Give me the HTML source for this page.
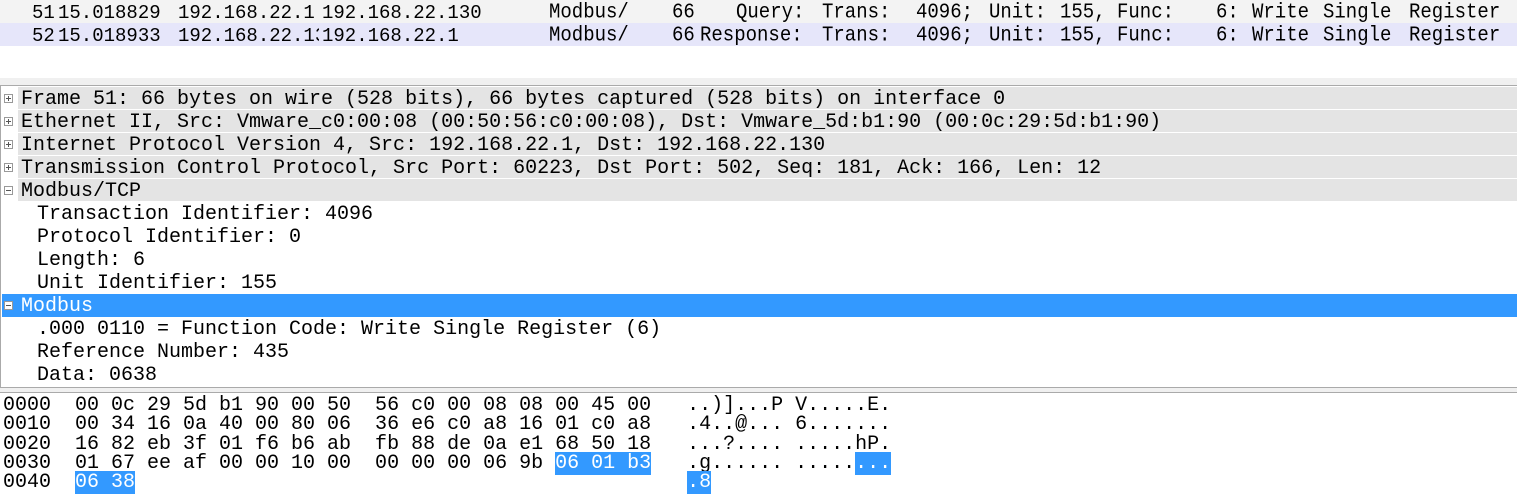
<!DOCTYPE html>
<html><head><style>
*{margin:0;padding:0;box-sizing:border-box}
body{width:1517px;height:502px;background:#fff;position:relative;overflow:hidden;font-family:"Liberation Mono","DejaVu Sans Mono",monospace;color:#000}
.a{position:absolute;white-space:pre}
.r{position:absolute;left:0;width:1517px;height:23px}
.m{font-size:19px;line-height:23px}
.n{font-family:"Liberation Mono",monospace;font-size:19px;line-height:23px;transform:scaleY(1.12);transform-origin:0 50%}
.t{font-size:20px;line-height:23px;position:absolute;white-space:pre}
.g{position:absolute;left:18px;right:0;height:22px;background:#e4e4e4}
.box{position:absolute;left:4px;width:9px;height:9px;border:1px solid #999;background:#fff}
.box:before{content:"";position:absolute;left:1px;top:3px;width:5px;height:1px;background:#555}
.p:after{content:"";position:absolute;left:3px;top:1px;width:1px;height:5px;background:#555}
.h{font-size:20px;line-height:19.3px;position:absolute;left:3px;top:396px;white-space:pre}
.s{background:#3399ff;color:#fff}
</style></head><body>
<div class="r" style="top:0;background:#f3f3f3"></div>
<div class="r" style="top:23px;background:#e6e6fa"></div>
<div class="a m" style="left:32px;top:2px">51</div>
<div class="a m" style="left:58px;top:2px">15.018829</div>
<div class="a m" style="left:178px;top:2px">192.168.22.1</div>
<div class="a m" style="left:322px;top:2px">192.168.22.130</div>
<div class="a m" style="left:32px;top:25px">52</div>
<div class="a m" style="left:58px;top:25px">15.018933</div>
<div class="a m" style="left:178px;top:25px;width:141px;overflow:hidden">192.168.22.130</div>
<div class="a m" style="left:322px;top:25px">192.168.22.1</div>

<div class="a n" style="left:549px;top:1px">Modbus/</div>
<div class="a n" style="left:549px;top:24px">Modbus/</div>
<div class="a n" style="left:672px;top:1px">66</div>
<div class="a n" style="left:672px;top:24px">66</div>
<div class="a n" style="left:736px;top:1px">Query:</div>
<div class="a n" style="left:700px;top:24px">Response:</div>
<div class="a n" style="left:822px;top:1px">Trans:</div>
<div class="a n" style="left:822px;top:24px">Trans:</div>
<div class="a n" style="left:916px;top:1px">4096;</div>
<div class="a n" style="left:916px;top:24px">4096;</div>
<div class="a n" style="left:989px;top:1px">Unit:</div>
<div class="a n" style="left:989px;top:24px">Unit:</div>
<div class="a n" style="left:1060px;top:1px">155,</div>
<div class="a n" style="left:1060px;top:24px">155,</div>
<div class="a n" style="left:1117px;top:1px">Func:</div>
<div class="a n" style="left:1117px;top:24px">Func:</div>
<div class="a n" style="left:1216px;top:1px">6:</div>
<div class="a n" style="left:1216px;top:24px">6:</div>
<div class="a n" style="left:1252px;top:1px">Write</div>
<div class="a n" style="left:1252px;top:24px">Write</div>
<div class="a n" style="left:1323px;top:1px">Single</div>
<div class="a n" style="left:1323px;top:24px">Single</div>
<div class="a n" style="left:1409px;top:1px">Register</div>
<div class="a n" style="left:1409px;top:24px">Register</div>

<div class="r" style="top:78px;height:8px;background:#f0f0f0;border-bottom:1px solid #aaa"></div>
<div style="position:absolute;left:0;top:86px;width:1px;height:301px;background:#aaa"></div>
<div class="g" style="top:87px"></div>
<div class="g" style="top:110px"></div>
<div class="g" style="top:133px"></div>
<div class="g" style="top:156px"></div>
<div class="g" style="top:179px"></div>
<div style="position:absolute;left:2px;right:0;top:294px;height:23px;background:#3399ff"></div>
<div class="box p" style="top:94px"></div>
<div class="box p" style="top:117px"></div>
<div class="box p" style="top:140px"></div>
<div class="box p" style="top:163px"></div>
<div class="box" style="top:186px"></div>
<div class="box" style="top:301px"></div>
<div class="t" style="left:21px;top:88px">Frame 51: 66 bytes on wire (528 bits), 66 bytes captured (528 bits) on interface 0</div>
<div class="t" style="left:21px;top:111px">Ethernet II, Src: Vmware_c0:00:08 (00:50:56:c0:00:08), Dst: Vmware_5d:b1:90 (00:0c:29:5d:b1:90)</div>
<div class="t" style="left:21px;top:134px">Internet Protocol Version 4, Src: 192.168.22.1, Dst: 192.168.22.130</div>
<div class="t" style="left:21px;top:157px">Transmission Control Protocol, Src Port: 60223, Dst Port: 502, Seq: 181, Ack: 166, Len: 12</div>
<div class="t" style="left:21px;top:180px">Modbus/TCP</div>
<div class="t" style="left:37px;top:203px">Transaction Identifier: 4096</div>
<div class="t" style="left:37px;top:226px">Protocol Identifier: 0</div>
<div class="t" style="left:37px;top:249px">Length: 6</div>
<div class="t" style="left:37px;top:272px">Unit Identifier: 155</div>
<div class="t" style="left:21px;top:295px;color:#fff">Modbus</div>
<div class="t" style="left:37px;top:318px">.000 0110 = Function Code: Write Single Register (6)</div>
<div class="t" style="left:37px;top:341px">Reference Number: 435</div>
<div class="t" style="left:37px;top:364px">Data: 0638</div>
<div class="r" style="top:387px;height:6px;background:#f0f0f0;border-top:1px solid #aaa;border-bottom:1px solid #aaa"></div>
<div class="h">0000  00 0c 29 5d b1 90 00 50  56 c0 00 08 08 00 45 00   ..)]...P V.....E.
0010  00 34 16 0a 40 00 80 06  36 e6 c0 a8 16 01 c0 a8   .4..@... 6.......
0020  16 82 eb 3f 01 f6 b6 ab  fb 88 de 0a e1 68 50 18   ...?.... .....hP.
0030  01 67 ee af 00 00 10 00  00 00 00 06 9b <span class="s">06 01 b3</span>   .g...... .....<span class="s">...</span>
0040  <span class="s">06 38</span>                                              <span class="s">.8</span></div>
</body></html>
